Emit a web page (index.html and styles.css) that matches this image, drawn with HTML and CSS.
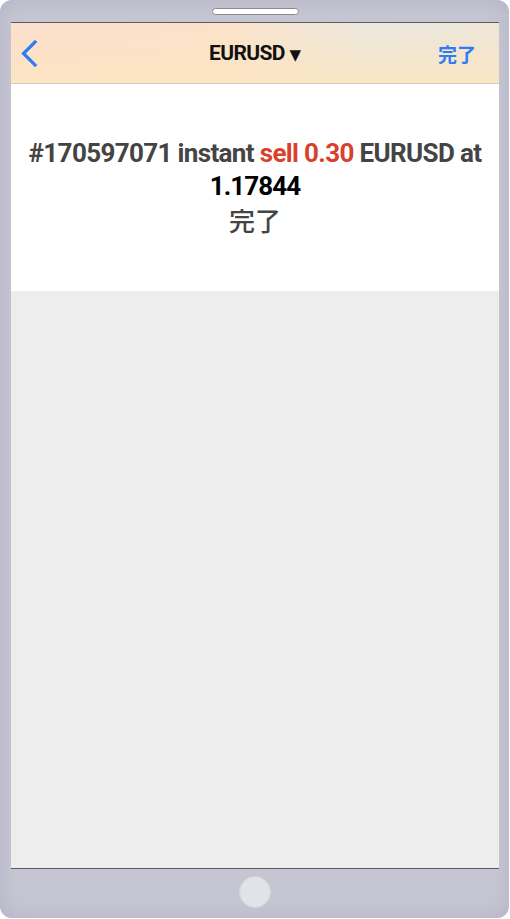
FILE: index.html
```html
<!DOCTYPE html>
<html lang="ja">
<head>
<meta charset="utf-8">
<title>EURUSD</title>
<link rel="stylesheet" href="styles.css">
</head>
<body>
<div class="phone">
  <div class="phone-top"><div class="speaker"></div></div>
  <div class="screen">
    <div class="navbar">
      <button class="nav-back" aria-label="戻る">
        <svg width="20" height="30" viewBox="0 0 20 30"><path d="M15 4 L3.5 15.5 L15 27" fill="none" stroke="#2e7cf5" stroke-width="3.2" stroke-linecap="square"/></svg>
      </button>
      <div class="nav-title">EURUSD <span class="caret">▼</span></div>
      <button class="nav-done">完了</button>
    </div>
    <div class="result">
      <p class="result-line">#170597071 instant <span class="sell">sell 0.30</span> EURUSD at</p>
      <p class="result-line price">1.17844</p>
      <p class="result-status">完了</p>
    </div>
    <div class="empty"></div>
  </div>
  <div class="phone-bottom"><div class="home"></div></div>
</div>
</body>
</html>
```
FILE: styles.css
```css
html, body {
  margin: 0;
  padding: 0;
  background: #ffffff;
}
.phone {
  width: 509px;
  height: 918px;
  box-sizing: border-box;
  padding: 0 10px 0 11px;
  border-radius: 12px;
  background: #c6c6d3;
  box-shadow: inset 0 0 22px #b3b2c5;
  display: flex;
  flex-direction: column;
  font-family: Roboto, "Liberation Sans", "Noto Sans CJK JP", sans-serif;
}
.phone-top {
  height: 22px;
  display: flex;
  justify-content: center;
  align-items: flex-start;
}
.speaker {
  margin-top: 8px;
  width: 85px;
  height: 5px;
  border: 1px solid #8c8c90;
  border-radius: 4px;
  background: #ffffff;
}
.screen {
  flex: 1;
  display: flex;
  flex-direction: column;
  border-top: 1px solid #5c5c5e;
  border-bottom: 1px solid #5c5c5e;
}
.navbar {
  height: 60px;
  border-bottom: 1px solid #d8ccba;
  background:
    linear-gradient(to bottom, rgba(251, 229, 192, 0) 0%, rgba(251, 229, 192, 0.9) 100%),
    linear-gradient(100deg, #fddfce 0%, #fbe2cb 45%, #ebe8e0 72%, #eee6d8 100%);
  display: flex;
  align-items: center;
  justify-content: space-between;
  position: relative;
}
.nav-back, .nav-done {
  border: 0;
  background: none;
  padding: 0;
  cursor: pointer;
}
.nav-back {
  margin-left: 9px;
  width: 20px;
  height: 30px;
  display: flex;
}
.nav-title {
  position: absolute;
  left: 0;
  right: 0;
  text-align: center;
  font-weight: 700;
  font-size: 21px;
  letter-spacing: -0.6px;
  color: #111111;
  pointer-events: none;
}
.caret {
  font-size: 15px;
  letter-spacing: 0;
  font-family: "DejaVu Sans", sans-serif;
}
.nav-done {
  margin-right: 23px;
  font-family: "Noto Sans CJK JP", sans-serif;
  font-weight: 700;
  font-size: 19px;
  color: #2e7cf5;
}
.result {
  height: 207px;
  box-sizing: border-box;
  padding-top: 53px;
  background: #ffffff;
  text-align: center;
}
.result-line {
  margin: 0;
  font-size: 26px;
  line-height: 33px;
  font-weight: 700;
  letter-spacing: -0.65px;
  color: #444444;
}
.sell {
  color: #d8412e;
}
.price {
  color: #000000;
  letter-spacing: -0.9px;
}
.result-status {
  margin: 0;
  font-family: "Noto Sans CJK JP", sans-serif;
  font-size: 26px;
  line-height: 33px;
  font-weight: 500;
  color: #444444;
}
.empty {
  flex: 1;
  background: #ededed;
}
.phone-bottom {
  height: 49px;
  display: flex;
  justify-content: center;
  align-items: flex-start;
}
.home {
  margin-top: 7px;
  width: 30px;
  height: 30px;
  border-radius: 50%;
  background: #e2e2e9;
  border: 1px solid #d4d4de;
}
```
